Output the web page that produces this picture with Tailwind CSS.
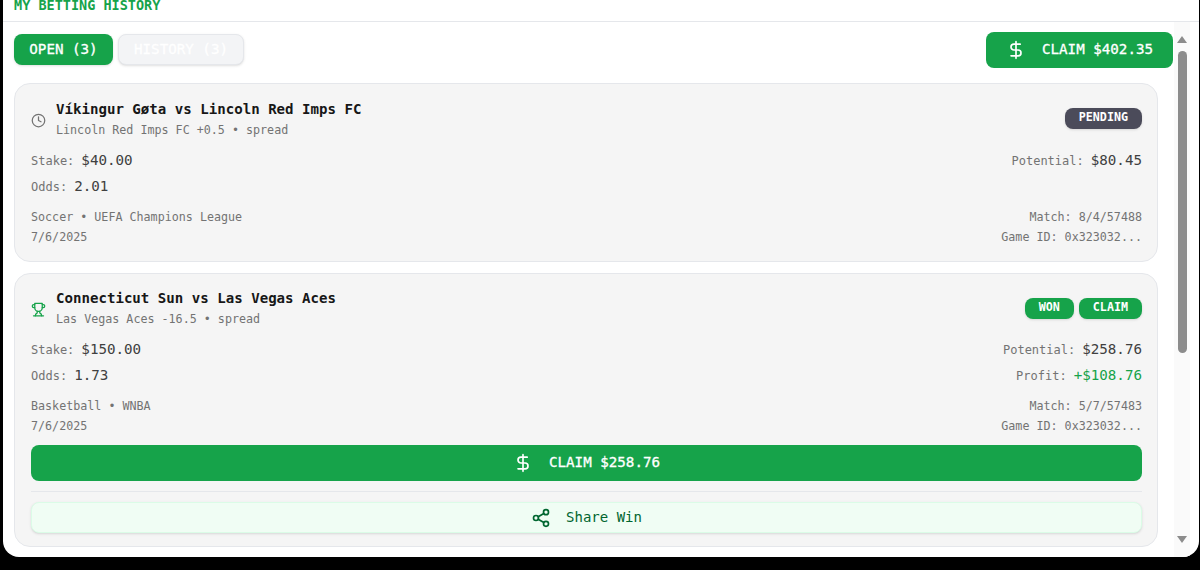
<!DOCTYPE html>
<html lang="en">
<head>
<meta charset="UTF-8" />
<title>My Betting History</title>
<script src="https://cdn.jsdelivr.net/npm/@tailwindcss/browser@4"></script>
</head>
<body class="bg-black h-[570px] overflow-hidden font-['DejaVu_Sans_Mono',monospace]">
<div class="ml-[3px] mr-px h-[557px] bg-white rounded-b-2xl overflow-hidden flex flex-col">
	<!-- header, top is cut off by the window -->
	<div class="h-[22px] shrink-0 border-b border-gray-200 flex items-end pb-[8px] pl-[11px]">
		<h2 class="text-[13.5px] leading-4 font-semibold text-[#16a34a]">MY BETTING HISTORY</h2>
	</div>
	<div class="flex-1 flex min-h-0">
		<!-- scroll content -->
		<div class="flex-1 min-w-0 pl-[11px] pr-[18px] overflow-hidden">
			<div class="h-[61px] pt-[10px] flex items-start justify-between">
				<div class="flex gap-[5px] pt-[2px]">
					<button class="w-[99px] h-[31px] rounded-lg bg-[#16a34a] text-white text-[14.2px] [-webkit-text-stroke:0.3px_white] shadow-sm">OPEN (3)</button>
					<button class="w-[126px] h-[31px] rounded-lg bg-gray-100 border border-gray-200 text-white text-[14.2px] [-webkit-text-stroke:0.3px_white] shadow-sm">HISTORY (3)</button>
				</div>
				<button class="w-[187px] h-[36px] -mr-[15px] rounded-lg bg-[#16a34a] text-white text-[14.2px] [-webkit-text-stroke:0.3px_white] flex items-center justify-center gap-[16px]">
					<svg class="w-[20px] h-[20px]" viewBox="0 0 24 24" fill="none" stroke="currentColor" stroke-width="2" stroke-linecap="round" stroke-linejoin="round"><line x1="12" y1="2" x2="12" y2="22"/><path d="M17 5H9.5a3.5 3.5 0 0 0 0 7h5a3.5 3.5 0 0 1 0 7H6"/></svg>
					<span>CLAIM $402.35</span>
				</button>
			</div>

			<!-- pending bet -->
			<div class="h-[179px] mb-[11px] rounded-2xl bg-neutral-100 border border-gray-200 pl-[16px] pr-[15px] pt-[15px]">
				<div class="flex items-center justify-between h-[40px]">
					<div class="flex items-center gap-[10px]">
						<svg class="w-[15px] h-[15px] mt-[2px] text-neutral-500" viewBox="0 0 24 24" fill="none" stroke="currentColor" stroke-width="2" stroke-linecap="round" stroke-linejoin="round"><circle cx="12" cy="12" r="10"/><polyline points="12 6 12 12 16 14"/></svg>
						<div>
							<div class="text-[14.1px] leading-5 font-semibold text-neutral-900">Víkingur Gøta vs Lincoln Red Imps FC</div>
							<div class="text-[11.7px] leading-5 mt-px text-neutral-500">Lincoln Red Imps FC +0.5 • spread</div>
						</div>
					</div>
					<span class="h-[21px] px-[14px] -mt-[2px] rounded-lg bg-[#4b4b5a] text-white text-[11.7px] font-bold flex items-center shadow-sm">PENDING</span>
				</div>
				<div class="flex justify-between mt-[8px]">
					<div>
						<div class="h-[26px] flex items-baseline gap-[7px]"><span class="text-[12px] text-neutral-500">Stake:</span><span class="text-[14.2px] leading-[26px] text-neutral-700">$40.00</span></div>
						<div class="h-[26px] flex items-baseline gap-[7px]"><span class="text-[12px] text-neutral-500">Odds:</span><span class="text-[14.2px] leading-[26px] text-neutral-700">2.01</span></div>
					</div>
					<div class="h-[26px] flex items-baseline gap-[7px]"><span class="text-[12px] text-neutral-500">Potential:</span><span class="text-[14.2px] leading-[26px] text-neutral-700">$80.45</span></div>
				</div>
				<div class="flex justify-between mt-[8px] text-[11.7px] leading-5 text-neutral-500">
					<div><div>Soccer • UEFA Champions League</div><div>7/6/2025</div></div>
					<div class="text-right"><div>Match: 8/4/57488</div><div>Game ID: 0x323032...</div></div>
				</div>
			</div>

			<!-- won bet -->
			<div class="h-[274px] rounded-2xl bg-neutral-100 border border-gray-200 pl-[16px] pr-[15px] pt-[14px]">
				<div class="flex items-center justify-between h-[40px]">
					<div class="flex items-center gap-[10px]">
						<svg class="w-[15px] h-[15px] mt-[2px] text-[#16a34a]" viewBox="0 0 24 24" fill="none" stroke="currentColor" stroke-width="2" stroke-linecap="round" stroke-linejoin="round"><path d="M6 9H4.5a2.5 2.5 0 0 1 0-5H6"/><path d="M18 9h1.5a2.5 2.5 0 0 0 0-5H18"/><path d="M4 22h16"/><path d="M10 14.66V17c0 .55-.47.98-.97 1.21C7.85 18.75 7 20.24 7 22"/><path d="M14 14.66V17c0 .55.47.98.97 1.21C16.15 18.75 17 20.24 17 22"/><path d="M18 2H6v7a6 6 0 0 0 12 0V2Z"/></svg>
						<div>
							<div class="text-[14.1px] leading-5 font-semibold text-neutral-900">Connecticut Sun vs Las Vegas Aces</div>
							<div class="text-[11.7px] leading-5 mt-px text-neutral-500">Las Vegas Aces -16.5 • spread</div>
						</div>
					</div>
					<div class="flex gap-[5px]">
						<span class="h-[21px] px-[14px] rounded-lg bg-[#16a34a] text-white text-[11.7px] font-bold flex items-center shadow-sm">WON</span>
						<span class="h-[21px] px-[14px] rounded-lg bg-[#16a34a] text-white text-[11.7px] font-bold flex items-center shadow-sm">CLAIM</span>
					</div>
				</div>
				<div class="flex justify-between mt-[8px]">
					<div>
						<div class="h-[26px] flex items-baseline gap-[7px]"><span class="text-[12px] text-neutral-500">Stake:</span><span class="text-[14.2px] leading-[26px] text-neutral-700">$150.00</span></div>
						<div class="h-[26px] flex items-baseline gap-[7px]"><span class="text-[12px] text-neutral-500">Odds:</span><span class="text-[14.2px] leading-[26px] text-neutral-700">1.73</span></div>
					</div>
					<div class="flex flex-col items-end">
						<div class="h-[26px] flex items-baseline gap-[7px]"><span class="text-[12px] text-neutral-500">Potential:</span><span class="text-[14.2px] leading-[26px] text-neutral-700">$258.76</span></div>
						<div class="h-[26px] flex items-baseline gap-[7px]"><span class="text-[12px] text-neutral-500">Profit:</span><span class="text-[14.2px] leading-[26px] text-[#16a34a]">+$108.76</span></div>
					</div>
				</div>
				<div class="flex justify-between mt-[8px] text-[11.7px] leading-5 text-neutral-500">
					<div><div>Basketball • WNBA</div><div>7/6/2025</div></div>
					<div class="text-right"><div>Match: 5/7/57483</div><div>Game ID: 0x323032...</div></div>
				</div>
				<button class="w-full h-[36px] mt-[9px] rounded-lg bg-[#16a34a] text-white text-[14.2px] [-webkit-text-stroke:0.3px_white] flex items-center justify-center gap-[16px]">
					<svg class="w-[20px] h-[20px]" viewBox="0 0 24 24" fill="none" stroke="currentColor" stroke-width="2" stroke-linecap="round" stroke-linejoin="round"><line x1="12" y1="2" x2="12" y2="22"/><path d="M17 5H9.5a3.5 3.5 0 0 0 0 7h5a3.5 3.5 0 0 1 0 7H6"/></svg>
					<span>CLAIM $258.76</span>
				</button>
				<div class="border-t border-gray-200 mt-[10px] pt-[10px]">
					<button class="w-full h-[31px] rounded-lg bg-green-50 border border-green-100 text-green-800 text-[14px] flex items-center justify-center gap-[15px] shadow-sm">
						<svg class="w-[20px] h-[20px]" viewBox="0 0 24 24" fill="none" stroke="currentColor" stroke-width="2" stroke-linecap="round" stroke-linejoin="round"><circle cx="18" cy="5" r="3"/><circle cx="6" cy="12" r="3"/><circle cx="18" cy="19" r="3"/><line x1="8.59" y1="13.51" x2="15.42" y2="17.49"/><line x1="15.41" y1="6.51" x2="8.59" y2="10.49"/></svg>
						<span>Share Win</span>
					</button>
				</div>
			</div>
		</div>
		<!-- scrollbar -->
		<div class="w-[16px] mr-[9px] -ml-[2px] bg-neutral-50 flex flex-col items-center pt-[14px] pb-[14px]">
			<div class="w-0 h-0 border-x-[5px] border-x-transparent border-b-[7px] border-b-[#8c8c8c]"></div>
			<div class="w-[9px] h-[302px] mt-[8px] rounded-full bg-[#8c8c8c]"></div>
			<div class="flex-1"></div>
			<div class="w-0 h-0 border-x-[5px] border-x-transparent border-t-[7px] border-t-[#8c8c8c]"></div>
		</div>
	</div>
</div>
</body>
</html>
